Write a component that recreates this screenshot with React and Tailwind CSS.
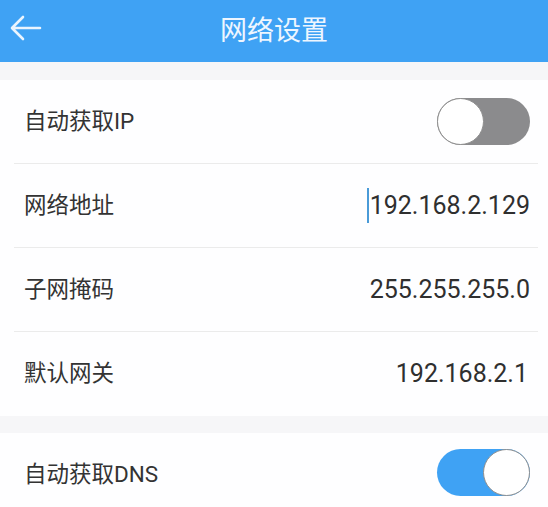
import React from "react";

function Toggle({ on }) {
  return (
    <div
      className={
        "relative w-[93px] h-[47px] rounded-full " +
        (on ? "bg-[#3fa2f4]" : "bg-[#8b8b8d]")
      }
    >
      <div
        className={
          "absolute top-0 w-[47px] h-[47px] rounded-full bg-white border border-[#8f8f8f] " +
          (on ? "right-0" : "left-0")
        }
      />
    </div>
  );
}

function Row({ label, children, border = true }) {
  return (
    <div
      className={
        "h-[84px] flex items-center justify-between ml-[14px] pl-[10px] pr-[18px] mr-[10px] " +
        (border ? "border-b border-[#ebebeb]" : "")
      }
    >
      <span className="text-[22.5px] text-[#333333]">{label}</span>
      {children}
    </div>
  );
}

export default function App() {
  return (
    <div
      className="w-[548px] h-[507px] overflow-hidden bg-[#fefeff]"
      style={{ fontFamily: 'Roboto, "Noto Sans CJK SC", sans-serif' }}
    >
      <div className="h-[62px] bg-[#3fa2f4] relative flex items-center justify-center">
        <svg
          className="absolute left-[10px] top-[15px]"
          width="32"
          height="26"
          viewBox="0 0 32 26"
          fill="none"
          stroke="#eaf4fe"
          strokeWidth="2.6"
          strokeLinecap="round"
          strokeLinejoin="round"
        >
          <path d="M30 13H3M13 2L2 13l11 11" />
        </svg>
        <span className="text-[27px] text-[#eef6ff] tracking-[0px]">网络设置</span>
      </div>
      <div className="h-[18px] bg-[#f6f6f8]" />
      <Row label="自动获取IP">
        <div className="-mr-[10px]">
          <Toggle on={false} />
        </div>
      </Row>
      <Row label="网络地址">
        <div className="flex items-center -mr-[10px]">
          <div className="w-[2px] h-[35px] bg-[#4a9bd8] mr-[1px]" />
          <span className="text-[25px] text-[#2f2f2f]">192.168.2.129</span>
        </div>
      </Row>
      <Row label="子网掩码">
        <span className="text-[25px] text-[#2f2f2f] -mr-[10px]">255.255.255.0</span>
      </Row>
      <Row label="默认网关" border={false}>
        <span className="text-[25px] text-[#2f2f2f] -mr-[8px]">192.168.2.1</span>
      </Row>
      <div className="h-[17px] bg-[#f6f6f8]" />
      <Row label="自动获取DNS" border={false}>
        <div className="-mr-[10px] -mt-[5px]">
          <Toggle on={true} />
        </div>
      </Row>
    </div>
  );
}
